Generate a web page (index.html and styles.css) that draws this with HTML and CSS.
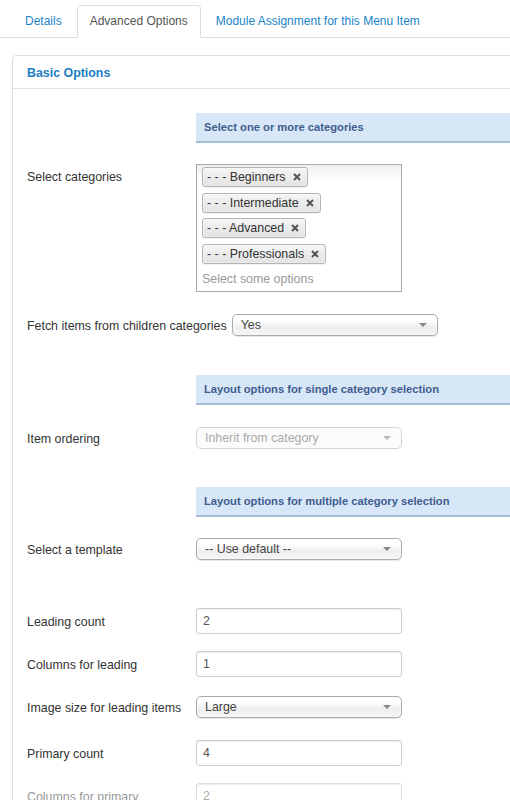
FILE: index.html
```html
<!DOCTYPE html>
<html>
<head>
<meta charset="utf-8">
<link rel="stylesheet" href="styles.css">
</head>
<body>
<div class="page">
  <ul class="tabs">
    <li class="tab"><a>Details</a></li>
    <li class="tab active"><a>Advanced Options</a></li>
    <li class="tab"><a>Module Assignment for this Menu Item</a></li>
  </ul>

  <div class="panel">
    <div class="panel-head">Basic Options</div>
    <div class="panel-body">
      <div class="section-head head-1">Select one or more categories</div>

      <div class="row row-multi">
        <div class="lbl lbl-top">Select categories</div>
        <div class="multi">
          <div class="chip"><span>- - - Beginners</span><svg class="x" width="8" height="8" viewBox="0 0 8 8"><path d="M1 1L7 7M7 1L1 7"/></svg></div>
          <div class="chip"><span>- - - Intermediate</span><svg class="x" width="8" height="8" viewBox="0 0 8 8"><path d="M1 1L7 7M7 1L1 7"/></svg></div>
          <div class="chip"><span>- - - Advanced</span><svg class="x" width="8" height="8" viewBox="0 0 8 8"><path d="M1 1L7 7M7 1L1 7"/></svg></div>
          <div class="chip"><span>- - - Professionals</span><svg class="x" width="8" height="8" viewBox="0 0 8 8"><path d="M1 1L7 7M7 1L1 7"/></svg></div>
          <div class="placeholder">Select some options</div>
        </div>
      </div>

      <div class="row row-fetch">
        <div class="lbl lbl-auto">Fetch items from children categories</div>
        <div class="select"><span>Yes</span><i class="caret"></i></div>
      </div>

      <div class="section-head head-2">Layout options for single category selection</div>

      <div class="row row-ordering">
        <div class="lbl">Item ordering</div>
        <div class="select disabled"><span>Inherit from category</span><i class="caret"></i></div>
      </div>

      <div class="section-head head-3">Layout options for multiple category selection</div>

      <div class="row row-template">
        <div class="lbl">Select a template</div>
        <div class="select"><span>-- Use default --</span><i class="caret"></i></div>
      </div>

      <div class="row">
        <div class="lbl">Leading count</div>
        <div class="input">2</div>
      </div>

      <div class="row">
        <div class="lbl">Columns for leading</div>
        <div class="input">1</div>
      </div>

      <div class="row row-image">
        <div class="lbl">Image size for leading items</div>
        <div class="select"><span>Large</span><i class="caret"></i></div>
      </div>

      <div class="row">
        <div class="lbl">Primary count</div>
        <div class="input">4</div>
      </div>

      <div class="row faded">
        <div class="lbl">Columns for primary</div>
        <div class="input">2</div>
      </div>
    </div>
  </div>
</div>
</body>
</html>
```

FILE: styles.css
```css
html, body {
  margin: 0;
  padding: 0;
  overflow: hidden;
  background: #ffffff;
}

body {
  font-family: "Liberation Sans", Arial, Helvetica, sans-serif;
  font-size: 12.4px;
  line-height: 13px;
  color: #333333;
}

.page {
  width: 640px;
}

/* Tabs */
.tabs {
  list-style: none;
  margin: 0;
  padding: 5px 0 0 12px;
  display: flex;
  border-bottom: 1px solid #dddddd;
  font-size: 12px;
}

.tab {
  margin-right: 2px;
  margin-bottom: -1px;
}

.tab a {
  display: block;
  padding: 9px 12px;
  line-height: 13px;
  border: 1px solid transparent;
  border-radius: 4px 4px 0 0;
  color: #1a84c8;
}

.tab.active a {
  color: #555555;
  background: #ffffff;
  border-color: #dddddd;
  border-bottom-color: #ffffff;
}

/* Panel */
.panel {
  margin: 17px 0 0 12px;
  border: 1px solid #dddddd;
  border-radius: 4px;
  height: 900px;
}

.panel-head {
  padding: 11px 14px 8px;
  border-bottom: 1px solid #e3e3e3;
  font-weight: bold;
  color: #1a7ec3;
  line-height: 13px;
}

.panel-body {
  padding: 24px 0 0 14px;
}

/* Section headers */
.section-head {
  margin-left: 169px;
  height: 28px;
  line-height: 28px;
  padding-left: 8px;
  background: #d8e7f8;
  border-bottom: 2px solid #a6bcd6;
  font-size: 11.2px;
  font-weight: bold;
  color: #3e5d8d;
}

.head-1 { margin-bottom: 21px; }
.head-2 { margin-bottom: 20px; }
.head-3 { margin-bottom: 19px; }

/* Rows */
.row {
  display: flex;
  align-items: center;
  min-height: 26px;
  margin-bottom: 17px;
}

.row > .lbl {
  padding-top: 2px;
}

.row-multi {
  align-items: flex-start;
  margin-bottom: 20px;
}

.row-fetch { margin-bottom: 37px; }
.row-ordering { margin-bottom: 36px; }
.row-template { margin-bottom: 46px; }
.row-image { margin-bottom: 20px; }

.lbl {
  width: 169px;
  flex-shrink: 0;
}

.row > .lbl-top {
  padding-top: 7px;
}

.lbl-auto {
  width: auto;
  margin-right: 5px;
}

/* Multi select (chosen) */
.multi {
  box-sizing: border-box;
  width: 206px;
  height: 128px;
  border: 1px solid #aaaaaa;
  padding: 2px 5px 0;
  display: flex;
  flex-direction: column;
  align-items: flex-start;
  background: linear-gradient(#eeeeee 0%, #ffffff 12%);
}

.chip {
  box-sizing: border-box;
  height: 20px;
  display: flex;
  align-items: center;
  padding: 0 6px 0 4px;
  margin-bottom: 5.6px;
  border: 1px solid #b4b4b4;
  border-radius: 3px;
  background: linear-gradient(#f6f6f6, #e2e2e2);
  box-shadow: 0 0 2px #ffffff inset, 0 1px 0 rgba(0, 0, 0, 0.05);
  color: #333333;
}

.chip span {
  padding-top: 1px;
}

.chip .x {
  margin-left: 7px;
  stroke: #555555;
  stroke-width: 2;
}

.placeholder {
  margin-top: 4px;
  color: #999999;
}

/* Select */
.select {
  box-sizing: border-box;
  position: relative;
  width: 206px;
  height: 22px;
  padding: 0 8px;
  display: flex;
  align-items: center;
  border: 1px solid #aaaaaa;
  border-radius: 5px;
  background: linear-gradient(#ffffff 20%, #f6f6f6 50%, #eeeeee 52%, #f4f4f4 100%);
  box-shadow: 0 0 3px #ffffff inset, 0 1px 1px rgba(0, 0, 0, 0.1);
  color: #444444;
}

.select span {
  flex: 1;
}

.caret {
  width: 0;
  height: 0;
  border-left: 4px solid transparent;
  border-right: 4px solid transparent;
  border-top: 4px solid #888888;
  margin-right: 2px;
}

.select.disabled {
  border-color: #d4d4d4;
  background: #fbfbfb;
  box-shadow: none;
  color: #aaaaaa;
}

.select.disabled .caret {
  border-top-color: #bbbbbb;
}

/* Text input */
.input {
  box-sizing: border-box;
  width: 206px;
  height: 26px;
  padding: 1px 6px 0;
  display: flex;
  align-items: center;
  border: 1px solid #cccccc;
  border-radius: 3px;
  box-shadow: inset 0 1px 1px rgba(0, 0, 0, 0.075);
  background: #ffffff;
  color: #555555;
}

.faded .lbl { color: #999999; }
.faded .input {
  color: #aaaaaa;
  border-color: #dddddd;
}
```
